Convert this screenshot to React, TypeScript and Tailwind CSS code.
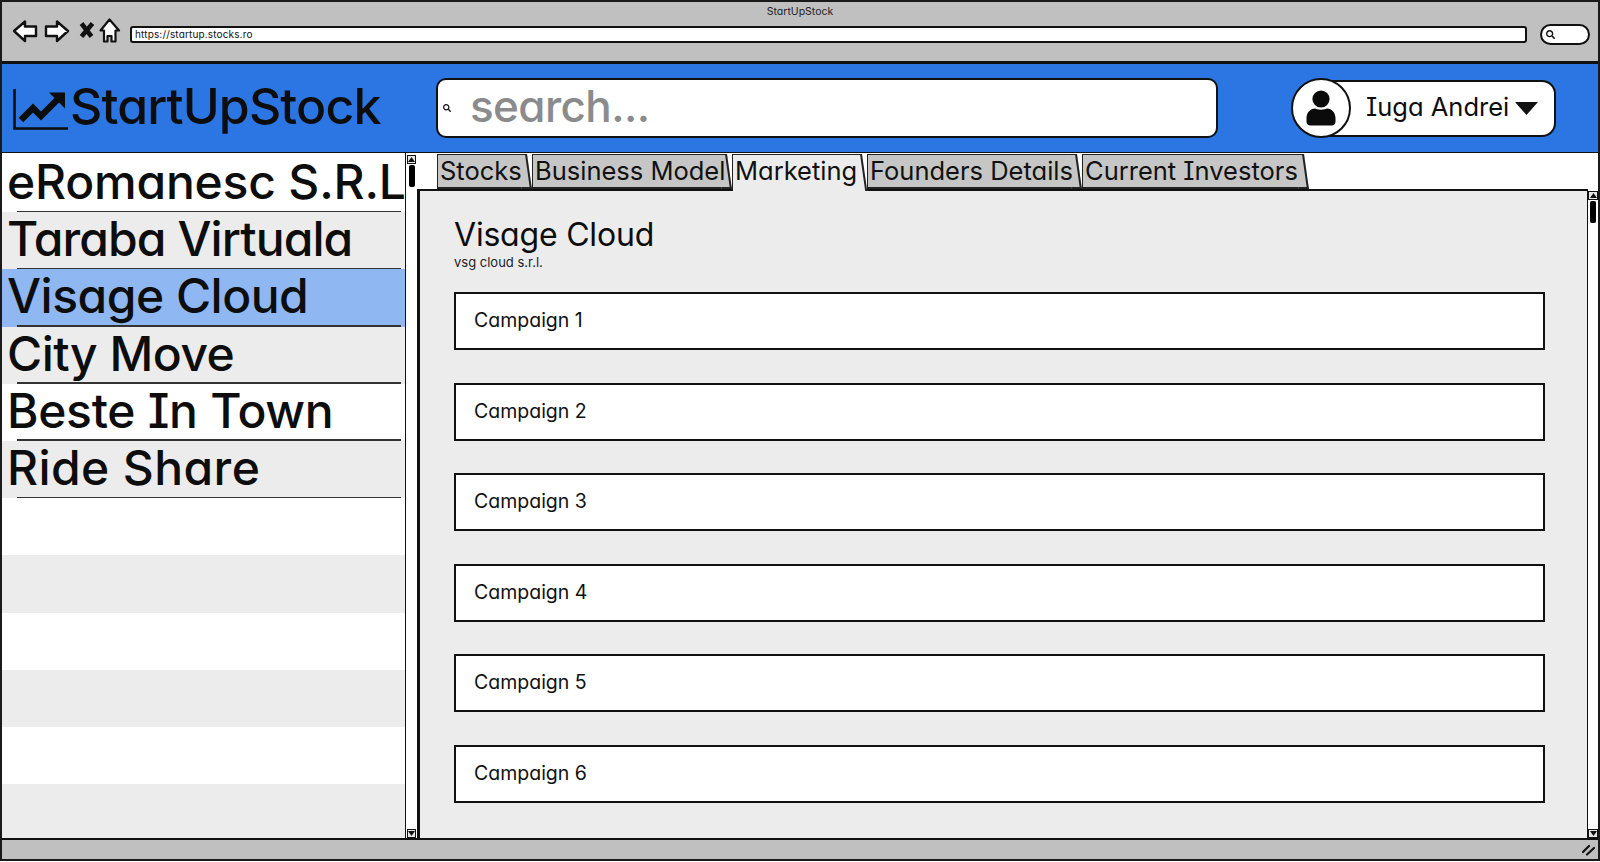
import React from "react";
import { FaSearch } from "react-icons/fa";

const F = "[font-family:Inter,'Liberation_Sans',sans-serif] [font-feature-settings:'cv11','cv08','ss03']";

const rows: { t: string; bg: string; line: boolean; track: string }[] = [
  { t: "eRomanesc S.R.L", bg: "bg-white", line: true, track: "tracking-[-0.2px]" },
  { t: "Taraba Virtuala", bg: "bg-[#ececec]", line: true, track: "tracking-[-0.9px]" },
  { t: "Visage Cloud", bg: "bg-[#8fb8f2]", line: true, track: "tracking-[-0.5px]" },
  { t: "City Move", bg: "bg-[#ececec]", line: true, track: "tracking-[-0.5px]" },
  { t: "Beste In Town", bg: "bg-white", line: true, track: "tracking-[-0.3px]" },
  { t: "Ride Share", bg: "bg-[#ececec]", line: true, track: "tracking-[0.4px]" },
  { t: "", bg: "bg-white", line: false, track: "" },
  { t: "", bg: "bg-[#ececec]", line: false, track: "" },
  { t: "", bg: "bg-white", line: false, track: "" },
  { t: "", bg: "bg-[#ececec]", line: false, track: "" },
  { t: "", bg: "bg-white", line: false, track: "" },
  { t: "", bg: "bg-[#ececec]", line: false, track: "" },
];

const tabs = [
  { t: "Stocks", w: "w-[95px]", active: false },
  { t: "Business Model", w: "w-[200px]", active: false },
  { t: "Marketing", w: "w-[135px]", active: true },
  { t: "Founders Details", w: "w-[215px]", active: false },
  { t: "Current Investors", w: "w-[227px]", active: false },
];

function Arrow({ up }: { up: boolean }) {
  return (
    <div className="h-[9px] w-full flex items-center justify-center border border-[#111] bg-[#e8e8e8] shrink-0">
      <svg width="7" height="5" viewBox="0 0 7 5">
        <path d={up ? "M3.5 0L7 5H0z" : "M0 0h7L3.5 5z"} fill="#111" />
      </svg>
    </div>
  );
}

function Scrollbar({ className }: { className: string }) {
  return (
    <div className={"flex flex-col justify-between bg-white shrink-0 " + className}>
      <div>
        <Arrow up />
        <div className="mx-auto mt-[1px] w-[6px] h-[22px] rounded-[2px] bg-black" />
      </div>
      <Arrow up={false} />
    </div>
  );
}

export default function App() {
  return (
    <div className={"w-[1600px] h-[862px] overflow-hidden bg-white text-[#0d0d0d] flex flex-col " + F}>
      <div className="h-[861px] border-[2px] border-[#1a1a1a] flex flex-col overflow-hidden">
        {/* browser chrome */}
        <div className="h-[62px] shrink-0 bg-[#c0c0c0] flex flex-col border-b-[3px] border-[#111]">
          <div className="h-[17px] mt-[1px] text-center text-[10.5px] leading-[17px] text-[#222]">StartUpStock</div>
          <div className="flex items-center h-[26px] mt-[1px] pl-[11px]">
            <svg width="112" height="26" viewBox="0 0 112 26" className="shrink-0 mb-[7px]">
              <path d="M1 13L12 3.5V8.5H23V18H12V23Z" fill="#fff" stroke="#111" strokeWidth="2.4" strokeLinejoin="round" />
              <path d="M55 13L44 3.5V8.5H33V18H44V23Z" fill="#fff" stroke="#111" strokeWidth="2.4" strokeLinejoin="round" />
              <path d="M68.5 5.5L78.5 18.5M79.5 5.5L68.5 18.5" stroke="#111" strokeWidth="4.6" />
              <path d="M96.5 1.5L106 12.5H102.5V23.5H98.5V18H94.5V23.5H91V12.5H87.5Z" fill="#fff" stroke="#111" strokeWidth="2.2" strokeLinejoin="round" />
            </svg>
            <div className="ml-[5px] w-[1397px] h-[17px] rounded-[3px] border-[2px] border-[#111] bg-white flex items-center pl-[3px] text-[10px] leading-none tracking-[0.15px] text-[#111]">
              https://startup.stocks.ro
            </div>
            <div className="ml-[13px] w-[50px] h-[21px] rounded-[11px] border-[2px] border-[#111] bg-white flex items-center pl-[4px]">
              <FaSearch className="text-[9px] text-[#111]" />
            </div>
          </div>
        </div>

        {/* blue header */}
        <div className="h-[89px] shrink-0 bg-[#2b76e3] border-b-[1px] border-[#111] flex items-center">
          <svg width="56" height="42" viewBox="0 0 56 42" className="ml-[11px] mt-[3px] shrink-0">
            <path d="M1.5 0V39.5H55" fill="none" stroke="#0d0d0d" strokeWidth="2.6" />
            <path d="M8 31L20 19L28 27L45 10" fill="none" stroke="#0d0d0d" strokeWidth="6.4" />
            <path d="M36 3.5H52V19.5Z" fill="#0d0d0d" />
          </svg>
          <div className="ml-[1px] w-[366px] mb-[5px] text-[50px] font-medium leading-none tracking-[-0.85px] text-[#0d0d0d] whitespace-nowrap">StartUpStock</div>
          <div className="w-[782px] h-[60px] rounded-[10px] border-[2px] border-[#111] bg-white flex items-center pl-[5px]">
            <FaSearch className="text-[8px] text-[#111]" />
            <span className="ml-[19px] mb-[5px] text-[44px] font-medium leading-none tracking-[-0.6px] text-[#8b8b8b]">search...</span>
          </div>
          <div className="relative ml-[73px] w-[265px] h-[60px] flex items-center">
            <div className="ml-[12px] w-[253px] h-[57px] rounded-[14px] border-[2px] border-[#111] bg-white flex items-center pl-[61px]">
              <span className="text-[25.5px] leading-none whitespace-nowrap mb-[2px]">Iuga Andrei</span>
              <svg width="23" height="13" viewBox="0 0 23 13" className="ml-[6px] mt-[1px] shrink-0">
                <path d="M0 0H23L11.5 13Z" fill="#111" />
              </svg>
            </div>
            <div className="absolute left-0 top-0 w-[60px] h-[60px] rounded-full border-[2px] border-[#111] bg-white flex items-center justify-center">
              <svg width="30" height="36" viewBox="0 0 30 36">
                <circle cx="15" cy="9" r="8.6" fill="#0b0b0b" />
                <path d="M9 18.5C11 20 19 20 21 18.5C26 18.5 29.5 23 29.5 28V31.5C29.5 34 28 35.5 25.5 35.5H4.5C2 35.5 0.5 34 0.5 31.5V28C0.5 23 4 18.5 9 18.5Z" fill="#0b0b0b" />
              </svg>
            </div>
          </div>
        </div>

        {/* body */}
        <div className="flex-1 flex min-h-0">
          {/* list */}
          <div className="w-[403px] shrink-0 flex flex-col overflow-hidden pt-[2px]">
            {rows.map((r, i) => (
              <div key={i} className={"relative h-[57.2px] shrink-0 pl-[5px] text-[48px] font-medium leading-[53px] whitespace-nowrap " + r.track + " " + r.bg}>
                {r.t}
                {r.line && <div className="absolute left-[15px] right-[4px] bottom-0 h-[1.5px] bg-[#333]" />}
              </div>
            ))}
          </div>
          <Scrollbar className="w-[12px] border-l-[1px] border-[#111] px-[1px] pt-[2px]" />

          {/* tabs + panel */}
          <div className="flex-1 flex flex-col min-w-0">
            <div className="relative z-10 h-[36px] shrink-0 flex items-end pl-[20px] bg-white">
              {tabs.map((tab) => (
                <div key={tab.t} className={"relative h-[35px] shrink-0 " + tab.w}>
                  <div className={"absolute left-0 top-0 right-[9px] border-t-[1px] border-l-[1px] border-[#222] " + (tab.active ? "bg-[#ececec] -bottom-[2px]" : "bg-[#c6c6c6] bottom-0 border-b-[2px]")} />
                  <div className={"absolute right-[5px] top-0 w-[10px] origin-top skew-x-[8deg] border-t-[1px] border-r-[2px] border-[#222] " + (tab.active ? "bg-[#ececec] -bottom-[2px]" : "bg-[#c6c6c6] bottom-0 border-b-[2px]")} />
                  <span className="relative block pl-[3px] text-[25.5px] leading-[33px] whitespace-nowrap text-[#111]">{tab.t}</span>
                </div>
              ))}
            </div>
            <div className="flex-1 flex min-h-0">
              <div className="flex-1 bg-[#ececec] border-t-[2px] border-l-[3px] border-[#111] pl-[34px] pr-[42px] pt-[24px] flex flex-col">
                <div className="text-[32px] leading-[40px] tracking-[-0.2px]">Visage Cloud</div>
                <div className="text-[13px] leading-[13px] mt-[1px] mb-[23px] text-[#222]">vsg cloud s.r.l.</div>
                <div className="flex flex-col gap-[32.5px]">
                  {[1, 2, 3, 4, 5, 6].map((n) => (
                    <div key={n} className="h-[58px] border-[2px] border-[#111] bg-white flex items-center pl-[18px] text-[19.5px] text-[#111]">
                      Campaign {n}
                    </div>
                  ))}
                </div>
              </div>
              <Scrollbar className="w-[11px] border-l-[1px] border-[#111] pt-[2px]" />
            </div>
          </div>
        </div>

        {/* status bar */}
        <div className="h-[21px] shrink-0 bg-[#c0c0c0] border-t-[2px] border-[#111] flex items-center justify-end pr-[3px]">
          <svg width="13" height="12" viewBox="0 0 13 12">
            <path d="M1 8L7 2M5 10.5L12 4" stroke="#111" strokeWidth="2.2" strokeLinecap="round" />
          </svg>
        </div>
      </div>
    </div>
  );
}
